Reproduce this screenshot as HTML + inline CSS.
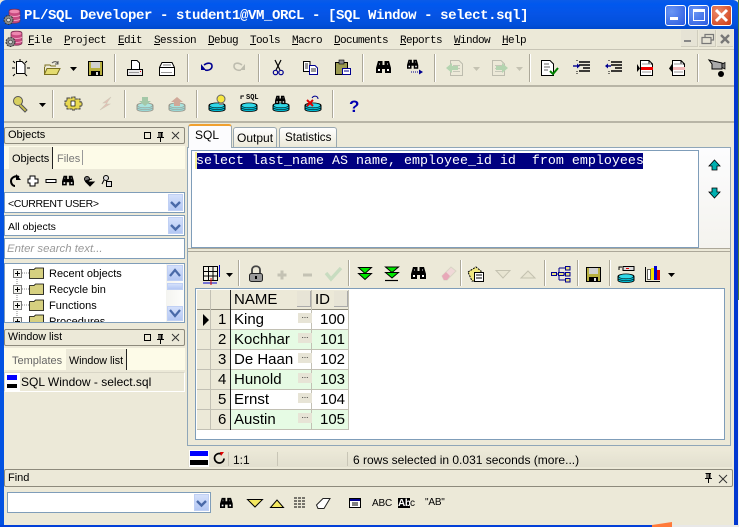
<!DOCTYPE html>
<html><head><meta charset="utf-8"><title>PL/SQL Developer</title>
<style>
html,body{margin:0;padding:0;background:#4d7a3a;}
#w{position:relative;width:739px;height:527px;overflow:hidden;background:#ece9d8;font-family:"Liberation Sans",sans-serif;font-size:11px;color:#000;}
#w div{position:absolute;box-sizing:border-box;}
.t{white-space:nowrap;line-height:16px;}
.m{font-family:"Liberation Mono",monospace;font-size:11px;letter-spacing:-.6px;top:33px;color:#000;white-space:nowrap;line-height:16px;}
.m u{text-decoration:underline;}
.hl{background:#b8b5a6;height:1px;}
.ph{border:1px solid #8d8a7c;border-radius:2px;background:#ece9d8;}
.inp{background:#fff;border:1px solid #7f9db9;}
.cb{background:linear-gradient(#d4e0fb,#b4c8f4);border:1px solid #c0d0f4;}
.c{font-size:15px;line-height:22px;white-space:nowrap;}
.gr{background:#e6fbe4;}
.dots{background:#e7e4d6;width:14px;height:10px;font-size:8px;line-height:5px;text-align:center;letter-spacing:0;}
svg{position:absolute;left:0;top:0;}
</style></head><body><div id="w">

<!-- window frame -->
<div style="left:0;top:0;width:739px;height:29px;background:linear-gradient(#0a5be8 0,#0058ee 4px,#0654e6 14px,#0250dc 24px,#0048cc 29px);border-radius:6px 6px 0 0;"></div>
<div style="left:0;top:29px;width:4px;height:498px;background:#0252e2;"></div>
<div style="left:734px;top:29px;width:4px;height:496px;background:#0238d0;"></div>
<div style="left:738px;top:0;width:1px;height:300px;background:#4d7a3a;"></div>
<div style="left:738px;top:300px;width:1px;height:227px;background:#f4f4f4;"></div>
<div style="left:0;top:525px;width:652px;height:2px;background:#0240d8;"></div>
<div style="left:672px;top:525px;width:67px;height:2px;background:#e8e8e8;"></div>
<div class="t" style="left:24px;top:8px;font:bold 14px/16px 'Liberation Mono',monospace;letter-spacing:-.4px;color:#fff;">PL/SQL Developer - student1@VM_ORCL - [SQL Window - select.sql]</div>

<!-- window buttons -->
<div style="left:665px;top:5px;width:21px;height:21px;border:1px solid #fff;border-radius:3px;background:radial-gradient(circle at 30% 30%,#6a96f4,#2a5ae0);"></div>
<div style="left:688px;top:5px;width:21px;height:21px;border:1px solid #fff;border-radius:3px;background:radial-gradient(circle at 30% 30%,#6a96f4,#2a5ae0);"></div>
<div style="left:711px;top:5px;width:21px;height:21px;border:1px solid #fff;border-radius:3px;background:radial-gradient(circle at 30% 30%,#ec8a6a,#cf3a12);"></div>
<div style="left:670px;top:17px;width:8px;height:3px;background:#fff;"></div>
<div style="left:693px;top:9px;width:12px;height:12px;border:1px solid #fff;border-top:3px solid #fff;"></div>

<!-- menu -->
<div class="hl" style="left:4px;top:49px;width:730px;background:#c8c5b6;"></div>
<div class="m" style="left:28px;"><u>F</u>ile</div>
<div class="m" style="left:64px;"><u>P</u>roject</div>
<div class="m" style="left:118px;"><u>E</u>dit</div>
<div class="m" style="left:154px;"><u>S</u>ession</div>
<div class="m" style="left:208px;"><u>D</u>ebug</div>
<div class="m" style="left:250px;"><u>T</u>ools</div>
<div class="m" style="left:292px;"><u>M</u>acro</div>
<div class="m" style="left:334px;"><u>D</u>ocuments</div>
<div class="m" style="left:400px;"><u>R</u>eports</div>
<div class="m" style="left:454px;"><u>W</u>indow</div>
<div class="m" style="left:502px;"><u>H</u>elp</div>
<div style="left:681px;top:30px;width:17px;height:17px;background:#e6e3d5;border-right:1px solid #d0cdbe;border-bottom:1px solid #d0cdbe;"></div>
<div style="left:699px;top:30px;width:17px;height:17px;background:#e6e3d5;border-right:1px solid #d0cdbe;border-bottom:1px solid #d0cdbe;"></div>
<div style="left:717px;top:30px;width:16px;height:17px;background:#e6e3d5;border-bottom:1px solid #d0cdbe;"></div>

<div class="hl" style="left:4px;top:85px;width:730px;height:2px;"></div>
<div class="hl" style="left:4px;top:121px;width:730px;height:2px;"></div>

<!-- Objects panel -->
<div class="ph" style="left:4px;top:127px;width:181px;height:17px;"></div>
<div class="t" style="left:8px;top:127px;">Objects</div>
<div style="left:4px;top:146px;width:181px;height:23px;background:#fdfbe8;"></div>
<div style="left:9px;top:147px;width:44px;height:22px;background:#ece9d8;border-right:1px solid #222;"></div>
<div class="t" style="left:12px;top:151px;">Objects</div>
<div class="t" style="left:57px;top:151px;color:#777;">Files</div>
<div style="left:82px;top:150px;width:1px;height:15px;background:#999;"></div>

<div class="inp" style="left:4px;top:192px;width:181px;height:21px;"></div>
<div class="t" style="left:8px;top:196px;font-size:10.5px;letter-spacing:-.35px;">&lt;CURRENT USER&gt;</div>
<div class="cb" style="left:168px;top:194px;width:15px;height:17px;"></div>
<div class="inp" style="left:4px;top:215px;width:181px;height:21px;"></div>
<div class="t" style="left:8px;top:219px;font-size:10.5px;">All objects</div>
<div class="cb" style="left:168px;top:217px;width:15px;height:17px;"></div>
<div class="inp" style="left:4px;top:238px;width:181px;height:21px;border-color:#7f9db9;"></div>
<div class="t" style="left:7px;top:241px;color:#999;font-style:italic;font-size:11.4px;">Enter search text...</div>

<!-- tree -->
<div class="inp" style="left:4px;top:263px;width:181px;height:60px;overflow:hidden;">
 <div class="t" style="left:44px;top:2px;font-size:11px;">Recent objects</div>
 <div class="t" style="left:44px;top:18px;font-size:11px;">Recycle bin</div>
 <div class="t" style="left:44px;top:34px;font-size:11px;">Functions</div>
 <div class="t" style="left:44px;top:50px;font-size:11px;">Procedures</div>
</div>
<div style="left:166px;top:264px;width:18px;height:58px;background:linear-gradient(90deg,#f4f4f0,#fdfdfb);"></div>
<div class="cb" style="left:167px;top:265px;width:16px;height:16px;"></div>
<div class="cb" style="left:167px;top:283px;width:16px;height:7px;"></div>
<div class="cb" style="left:167px;top:306px;width:16px;height:15px;"></div>

<!-- Window list panel -->
<div class="ph" style="left:4px;top:329px;width:181px;height:17px;"></div>
<div class="t" style="left:8px;top:329px;font-size:10.7px;">Window list</div>
<div style="left:4px;top:348px;width:181px;height:22px;background:#fdfbe8;"></div>
<div style="left:66px;top:349px;width:61px;height:21px;background:#ece9d8;border-right:1px solid #222;"></div>
<div class="t" style="left:12px;top:353px;color:#666;">Templates</div>
<div class="t" style="left:69px;top:353px;font-size:10.7px;">Window list</div>
<div style="left:4px;top:372px;width:181px;height:20px;background:#ece9d8;border:1px solid #d8d5c6;border-right:1px solid #fff;border-bottom:1px solid #fff;"></div>
<div style="left:5px;top:373px;width:15px;height:18px;background:#fff;"></div>
<div style="left:7px;top:375px;width:10px;height:5px;background:#0000ff;"></div>
<div style="left:7px;top:384px;width:10px;height:4px;background:#000;"></div>
<div class="t" style="left:21px;top:374px;font-size:12px;">SQL Window - select.sql</div>

<!-- tabs -->
<div style="left:187px;top:147px;width:544px;height:299px;border:1px solid #8fa6b8;background:#ece9d8;"></div>
<div style="left:233px;top:127px;width:44px;height:20px;border:1px solid #9aa8b0;border-bottom:0;border-radius:3px 3px 0 0;background:linear-gradient(#fff,#ece9d8);"></div>
<div style="left:279px;top:127px;width:58px;height:20px;border:1px solid #9aa8b0;border-bottom:0;border-radius:3px 3px 0 0;background:linear-gradient(#fff,#ece9d8);"></div>
<div style="left:188px;top:124px;width:44px;height:25px;border:1px solid #9aa8b0;border-top:2px solid #f0a030;border-bottom:0;border-radius:3px 3px 0 0;background:#fcfcfe;"></div>
<div class="t" style="left:195px;top:127px;font-size:12px;">SQL</div>
<div class="t" style="left:237px;top:130px;font-size:12px;">Output</div>
<div class="t" style="left:285px;top:130px;font-size:11.6px;">Statistics</div>

<!-- editor -->
<div style="left:188px;top:148px;width:542px;height:100px;background:linear-gradient(#fcfcfe,#f4f3ee);"></div>
<div class="inp" style="left:191px;top:150px;width:508px;height:98px;"></div>
<div style="left:197px;top:153px;width:446px;height:16px;background:#000080;"></div>
<div style="left:195px;top:152px;width:2px;height:17px;background:#f4f09a;"></div>
<div class="t" style="left:196px;top:154px;font:13.33px/15px 'Liberation Mono',monospace;color:#fff;white-space:pre;">select last_name AS name, employee_id id  from employees</div>
<div style="left:188px;top:248px;width:542px;height:1px;background:#aca899;"></div>
<div style="left:188px;top:251px;width:542px;height:1px;background:#aca899;"></div>

<!-- grid -->
<div class="inp" style="left:195px;top:288px;width:530px;height:152px;"></div>
<div style="left:197px;top:290px;width:152px;height:20px;background:#ece9d8;border-bottom:1px solid #8d8a7c;"></div>
<div style="left:197px;top:310px;width:34px;height:120px;background:#ece9d8;"></div>
<div style="left:231px;top:310px;width:118px;height:20px;background:#fff;"></div>
<div class="gr" style="left:231px;top:330px;width:118px;height:20px;"></div>
<div style="left:231px;top:350px;width:118px;height:20px;background:#fff;"></div>
<div class="gr" style="left:231px;top:370px;width:118px;height:20px;"></div>
<div style="left:231px;top:390px;width:118px;height:20px;background:#fff;"></div>
<div class="gr" style="left:231px;top:410px;width:118px;height:20px;"></div>
<div style="left:197px;top:329px;width:152px;height:1px;background:#c2c0b4;"></div>
<div style="left:197px;top:349px;width:152px;height:1px;background:#c2c0b4;"></div>
<div style="left:197px;top:369px;width:152px;height:1px;background:#c2c0b4;"></div>
<div style="left:197px;top:389px;width:152px;height:1px;background:#c2c0b4;"></div>
<div style="left:197px;top:409px;width:152px;height:1px;background:#c2c0b4;"></div>
<div style="left:197px;top:429px;width:152px;height:1px;background:#c2c0b4;"></div>
<div style="left:210px;top:290px;width:1px;height:140px;background:#c2c0b4;"></div>
<div style="left:230px;top:290px;width:1px;height:140px;background:#222;"></div>
<div style="left:311px;top:290px;width:1px;height:140px;background:#c2c0b4;"></div>
<div style="left:348px;top:290px;width:1px;height:140px;background:#c2c0b4;"></div>
<div style="left:297px;top:291px;width:14px;height:16px;background:#e7e4d6;border-right:1px solid #aaa;border-bottom:1px solid #aaa;"></div>
<div style="left:334px;top:291px;width:14px;height:16px;background:#e7e4d6;border-right:1px solid #aaa;border-bottom:1px solid #aaa;"></div>
<div class="c" style="left:234px;top:289px;">NAME</div>
<div class="c" style="left:315px;top:289px;">ID</div>
<div class="c" style="left:218px;top:309px;">1</div><div class="c" style="left:234px;top:309px;">King</div><div class="c" style="left:320px;top:309px;">100</div>
<div class="c" style="left:218px;top:329px;">2</div><div class="c" style="left:234px;top:329px;">Kochhar</div><div class="c" style="left:320px;top:329px;">101</div>
<div class="c" style="left:218px;top:349px;">3</div><div class="c" style="left:234px;top:349px;">De Haan</div><div class="c" style="left:320px;top:349px;">102</div>
<div class="c" style="left:218px;top:369px;">4</div><div class="c" style="left:234px;top:369px;">Hunold</div><div class="c" style="left:320px;top:369px;">103</div>
<div class="c" style="left:218px;top:389px;">5</div><div class="c" style="left:234px;top:389px;">Ernst</div><div class="c" style="left:320px;top:389px;">104</div>
<div class="c" style="left:218px;top:409px;">6</div><div class="c" style="left:234px;top:409px;">Austin</div><div class="c" style="left:320px;top:409px;">105</div>
<div class="dots" style="left:298px;top:313px;">...</div>
<div class="dots" style="left:298px;top:333px;">...</div>
<div class="dots" style="left:298px;top:353px;">...</div>
<div class="dots" style="left:298px;top:373px;">...</div>
<div class="dots" style="left:298px;top:393px;">...</div>
<div class="dots" style="left:298px;top:413px;">...</div>

<!-- status -->
<div style="left:188px;top:450px;width:544px;height:17px;background:linear-gradient(#ece9d8,#e2dfcf);"></div>
<div style="left:189px;top:450px;width:20px;height:17px;background:#fff;"></div>
<div style="left:190px;top:451px;width:18px;height:5px;background:#0000ff;"></div>
<div style="left:190px;top:460px;width:18px;height:5px;background:#000;"></div>
<div style="left:228px;top:452px;width:1px;height:14px;background:#c8c5b6;"></div>
<div style="left:277px;top:452px;width:1px;height:14px;background:#c8c5b6;"></div>
<div style="left:347px;top:452px;width:1px;height:14px;background:#c8c5b6;"></div>
<div class="t" style="left:233px;top:452px;font-size:12px;">1:1</div>
<div class="t" style="left:353px;top:452px;font-size:12px;">6 rows selected in 0.031 seconds (more...)</div>

<!-- find -->
<div class="ph" style="left:4px;top:469px;width:729px;height:18px;"></div>
<div class="t" style="left:8px;top:470px;">Find</div>
<div class="inp" style="left:7px;top:492px;width:204px;height:21px;"></div>
<div class="cb" style="left:194px;top:494px;width:15px;height:17px;"></div>
<div class="t" style="left:372px;top:496px;font-size:10px;letter-spacing:-.2px;">ABC</div>
<div style="left:398px;top:498px;width:12px;height:10px;background:#000;"></div>
<div class="t" style="left:398px;top:496px;font-size:10px;font-weight:bold;color:#fff;letter-spacing:-.3px;">Ab</div>
<div class="t" style="left:410px;top:496px;font-size:10px;">c</div>
<div class="t" style="left:425px;top:495px;font-size:10px;letter-spacing:-.2px;">"AB"</div>

<svg width="739" height="527" viewBox="0 0 739 527" xmlns="http://www.w3.org/2000/svg">
<defs>
 <g id="bin"><path d="M0 8L2 1H6.500V5H8.500V1H13L15 8V13H9V9H6V13H0Z" fill="#000"/><rect x="2" y="9" width="2" height="2" fill="#fff"/><rect x="11" y="9" width="2" height="2" fill="#fff"/><rect x="3" y="3" width="1" height="2" fill="#777"/><rect x="11" y="3" width="1" height="2" fill="#777"/></g>
 <g id="db"><path d="M0 8C0 4 16 4 16 8V13C16 16.500 0 16.500 0 13Z" fill="#00b8d0" stroke="#000"/><ellipse cx="8" cy="8" rx="7.500" ry="3" fill="#30d8e8" stroke="#000" stroke-width=".7"/><path d="M0 11C3 14 13 14 16 11" fill="none" stroke="#000" stroke-width=".7"/></g>
 <g id="save"><rect x=".5" y=".5" width="14" height="14" fill="#b8b040" stroke="#000"/><rect x="3" y="1" width="9" height="6" fill="#d0d0d0"/><rect x="3" y="10" width="9" height="5" fill="#000"/><rect x="8" y="11" width="2" height="3" fill="#ddd"/></g>
 <g id="doc2"><path d="M3.500 .5H12L15.500 4V15.500H3.500Z" fill="#fff" stroke="#000"/><path d="M12 .5V4H15.500" fill="none" stroke="#000"/></g>
 <path id="drop" d="M0 0H7L3.500 4Z" fill="#000"/>
 <path id="gdrop" d="M0 0H7L3.500 4Z" fill="#c4c2b2"/>
 <g id="gdoc"><path d="M3.500 .5H12L15.500 4V15.500H3.500Z" fill="#ece9d8" stroke="#bdbcae"/><rect x="6" y="5" width="7" height="1" fill="#c6c6b8"/><rect x="6" y="8" width="7" height="1" fill="#c6c6b8"/><rect x="6" y="11" width="7" height="1" fill="#c6c6b8"/></g>
 <g id="logo"><path d="M6 2C6 -.5 17 -.5 17 2V12C17 15 6 15 6 12Z" fill="#c84a80" stroke="#703050" stroke-width=".7"/><ellipse cx="11.500" cy="2.500" rx="5" ry="1.800" fill="#ee88b0"/><path d="M6 6C8 8 15 8 17 6M6 10C8 12 15 12 17 10" fill="none" stroke="#f0a0c0"/><circle cx="5.500" cy="11" r="4.500" fill="#8a8a88" stroke="#333" stroke-dasharray="2 1"/><circle cx="5.500" cy="11" r="1.800" fill="#ddd" stroke="#333" stroke-width=".6"/></g>
 <g id="chev"><path d="M3 6L7.500 10.500L12 6" fill="none" stroke="#4a6aa8" stroke-width="2.400"/></g>
 <g id="folder"><path d="M.5 2.500H5L6.500 1H14.500V11.500H.5Z" fill="#d6d080" stroke="#000" stroke-width=".8"/></g>
 <g id="plus"><rect x=".5" y=".5" width="8" height="8" fill="#f4f4f0" stroke="#777"/><path d="M2 4.500H7M4.500 2V7" stroke="#000"/></g>
 <g id="panelbtns"><rect x=".5" y=".5" width="6" height="6" fill="none" stroke="#000"/><path d="M14 0H19V1H18.500V5H20V6H17V10H16V6H13V5H14.500V1H14ZM15.500 1V5H16.500V1Z" fill="#000"/><path d="M28 0L35 7M35 0L28 7" stroke="#333" fill="none"/></g>
 <g id="gup"><path d="M0 8L7 1L14 8Z" fill="#e8e5d2" stroke="#c4c2b0"/></g>
</defs>

<!-- app logos -->
<use href="#logo" x="3" y="9"/>
<use href="#logo" x="5" y="31"/>

<!-- close X, MDI glyphs -->
<path d="M716 10L727 21M727 10L716 21" stroke="#fff" stroke-width="3" fill="none"/>
<rect x="684" y="40" width="7" height="2" fill="#888"/>
<path d="M702 37.500H711V43.500H702ZM705 37V34.500H713.500V40H711" fill="none" stroke="#777" stroke-width="1.200"/>
<path d="M721 35L729 43M729 35L721 43" stroke="#777" stroke-width="2.400" fill="none"/>

<!-- toolbar 1 -->
<path d="M16.500 61.500H22L25 64.500V73.500H16.500Z" fill="#fff" stroke="#000"/>
<path d="M20 59V61M12 68H15M27 68H30M13 61L15 63M27 61L25 63M13 76L15 74M27 76L25 74" stroke="#000" fill="none"/>
<path d="M44.500 67V74.500H57L60 68.500H47L44.500 74" fill="#e4dc70" stroke="#7a7020"/>
<path d="M45 67V65H50L51 66H56" fill="none" stroke="#7a7020"/>
<path d="M52 63C54 61 57 61 58 64M58 61V64H55" fill="none" stroke="#555"/>
<use href="#drop" x="70" y="67"/>
<use href="#save" x="88" y="61"/>
<rect x="114" y="54" width="1" height="28" fill="#aca899"/>
<rect x="115" y="54" width="1" height="28" fill="#fff"/>
<path d="M127.500 69.500H142.500V75.500H127.500Z" fill="#e8e8e8" stroke="#000"/><path d="M131.500 60.500H137L139.500 63V69.500H131.500Z" fill="#fff" stroke="#000"/><rect x="129" y="72" width="10" height="1" fill="#999"/><rect x="140" y="71" width="1" height="1" fill="#e00"/>
<path d="M159.500 67.500L162 62.500H172L174.500 67.500V75.500H159.500Z" fill="#fff" stroke="#000"/><path d="M160 67.500H174" stroke="#000"/><rect x="161" y="72" width="11" height="1" fill="#999"/><rect x="163" y="64" width="8" height="2" fill="#bbb"/>
<rect x="187" y="54" width="1" height="28" fill="#aca899"/><rect x="188" y="54" width="1" height="28" fill="#fff"/>
<path d="M205 70C209 71 212 69 212 66C212 63 208 62 204 65" fill="none" stroke="#000090" stroke-width="1.600"/><path d="M201 64V70H206" fill="#000090"/>
<path d="M241 70C237 71 234 69 234 66C234 63 238 62 242 65" fill="none" stroke="#bdbcae" stroke-width="1.600"/><path d="M245 64V70H240" fill="#bdbcae"/>
<rect x="258" y="54" width="1" height="28" fill="#aca899"/><rect x="259" y="54" width="1" height="28" fill="#fff"/>
<path d="M275 60L280 70M281 60L276 70" stroke="#000" stroke-width="1.200" fill="none"/><circle cx="275.500" cy="72.500" r="2.200" fill="none" stroke="#000090" stroke-width="1.200"/><circle cx="281" cy="72.500" r="2.200" fill="none" stroke="#000090" stroke-width="1.200"/>
<path d="M303.500 61.500H310V71.500H303.500Z" fill="#fff" stroke="#000"/><path d="M309.500 65.500H315L317.500 68V74.500H309.500Z" fill="#fff" stroke="#000090"/><path d="M305 64H308M305 66H308M305 68H308M311 69H316M311 71H316" stroke="#333"/>
<rect x="335.500" y="62.500" width="12" height="12" fill="#9a9a50" stroke="#000"/><rect x="339" y="60" width="5" height="4" fill="#888" stroke="#000" stroke-width=".6"/><path d="M342.500 68.500H350.500V74.500H342.500Z" fill="#fff" stroke="#000090"/><path d="M344 71H349" stroke="#000090"/>
<rect x="362" y="54" width="1" height="28" fill="#aca899"/><rect x="363" y="54" width="1" height="28" fill="#fff"/>
<use href="#bin" x="376" y="60"/>
<use href="#bin" transform="translate(407,59) scale(.75)"/>
<path d="M411 72H420" stroke="#000090" stroke-dasharray="1 1"/><path d="M419 69.500L423 72L419 74.500Z" fill="#000090"/>
<rect x="434" y="54" width="1" height="28" fill="#aca899"/><rect x="435" y="54" width="1" height="28" fill="#fff"/>
<use href="#gdoc" x="447" y="60"/><path d="M446 68L452 63V66H458V70H452V73Z" fill="#b4d4b0"/>
<use href="#gdrop" x="473" y="67"/>
<use href="#gdoc" x="489" y="60"/><path d="M508 68L502 63V66H496V70H502V73Z" fill="#b4d4b0"/>
<use href="#gdrop" x="516" y="67"/>
<rect x="529" y="54" width="1" height="28" fill="#aca899"/><rect x="530" y="54" width="1" height="28" fill="#fff"/>
<path d="M541.500 60.500H550L553.500 64V75.500H541.500Z" fill="#fff" stroke="#000"/><path d="M544 64H549M544 67H550M544 70H548" stroke="#666"/><path d="M550 71L553 74L558 68" fill="none" stroke="#008000" stroke-width="2"/>
<path d="M579 62H590M579 65H590M583 68H590M579 71H590" stroke="#000" stroke-width="1.400"/><path d="M573 66H578" stroke="#000090" stroke-width="1.400"/><path d="M577 63.500L580 66L577 68.500Z" fill="#000090"/><path d="M577 60V62M577 71V75" stroke="#000" stroke-dasharray="1 1"/>
<path d="M611 62H622M611 65H622M615 68H622M611 71H622" stroke="#000" stroke-width="1.400"/><path d="M606 66H611" stroke="#000090" stroke-width="1.400"/><path d="M608 63.500L605 66L608 68.500Z" fill="#000090"/><path d="M609 60V62M609 71V75" stroke="#000" stroke-dasharray="1 1"/>
<use href="#doc2" x="637" y="60"/><rect x="641" y="67" width="12" height="3" fill="#e00"/><path d="M637 64L640 68.500L637 72Z" fill="#000"/><path d="M642 64H651M642 72H651" stroke="#999"/>
<use href="#doc2" x="669" y="60"/><rect x="673" y="67" width="12" height="3" fill="#f4b8b8"/><path d="M672 64L669 68.500L672 72Z" fill="#000"/><path d="M674 64H683M674 72H683" stroke="#999"/>
<rect x="697" y="54" width="1" height="28" fill="#aca899"/><rect x="698" y="54" width="1" height="28" fill="#fff"/>
<path d="M709 60L722 63V69H712V64Z" fill="#aaa" stroke="#000"/><path d="M722 64L725 62.500V69L722 67.500Z" fill="#777" stroke="#000" stroke-width=".7"/><circle cx="721" cy="74" r="3" fill="#000"/>

<!-- toolbar 2 -->
<circle cx="18" cy="101" r="4.500" fill="#d8d060" stroke="#555"/><path d="M21 104L27 110L25 112L19 106" fill="#c8c050" stroke="#555"/>
<use href="#drop" x="39" y="103"/>
<rect x="52" y="90" width="1" height="28" fill="#aca899"/><rect x="53" y="90" width="1" height="28" fill="#fff"/>
<path d="M67 98H72V97H75V99H80V102H82V106H80V109H75V110H72V109H67V106H65V101H67Z" fill="#e8d850" stroke="#444" stroke-dasharray="3 .6"/><rect x="71" y="101" width="4" height="5" fill="#fff" stroke="#000" stroke-width=".7"/>
<path d="M111 97L103 103H107L100 110L110 104H106Z" fill="#e4c0b4" stroke="#d0c8b8" stroke-width=".6"/>
<rect x="124" y="90" width="1" height="28" fill="#aca899"/><rect x="125" y="90" width="1" height="28" fill="#fff"/>
<g opacity=".35"><use href="#db" transform="translate(137,99) scale(1,.8)"/></g><path d="M142 97H148V101H151L145 106L139 101H142Z" fill="#a4c8a8"/>
<g opacity=".35"><use href="#db" transform="translate(169,99) scale(1,.8)"/></g><path d="M174 106H180V102H183L177 97L171 102H174Z" fill="#d0a898"/>
<rect x="196" y="90" width="1" height="28" fill="#aca899"/><rect x="197" y="90" width="1" height="28" fill="#fff"/>
<use href="#db" transform="translate(209,99) scale(1,.8)"/><circle cx="221" cy="99" r="4" fill="#f8e840" stroke="#666"/><path d="M219 103H223V105H219Z" fill="#888"/>
<use href="#db" transform="translate(241,99) scale(1,.8)"/>
<use href="#db" transform="translate(273,99) scale(1,.8)"/><use href="#bin" transform="translate(275,95) scale(.7)"/>
<use href="#db" transform="translate(305,99) scale(1,.8)"/><path d="M307 100L313 106M313 100L307 106" stroke="#e00000" stroke-width="2"/><path d="M312 98C314 95 318 96 318 99" fill="none" stroke="#000090"/>
<rect x="332" y="90" width="1" height="28" fill="#aca899"/><rect x="333" y="90" width="1" height="28" fill="#fff"/>
<text x="349" y="112" font-family="Liberation Sans" font-weight="bold" font-size="17" fill="#0000b0">?</text>
<text x="246" y="99" font-family="Liberation Mono" font-weight="bold" font-size="7" fill="#000">SQL</text>
<path d="M241 99V96H244" fill="none" stroke="#000"/>

<!-- panel buttons -->
<use href="#panelbtns" x="144" y="132"/>
<use href="#panelbtns" x="144" y="334"/>
<path d="M705 473H711V474H710.500V478H712V479H709V483H708V479H705V478H706.500V474H706ZM707.500 474V478H708.500V474Z" fill="#000"/>
<path d="M719 475L727 483M727 475L719 483" stroke="#333" fill="none"/>

<!-- object toolbar -->
<path d="M19 177C15 175 11 178 11 181C11 184 13 186 15 186" fill="none" stroke="#000" stroke-width="2"/><path d="M16 174V180H21Z" fill="#000"/>
<path d="M30 176H35V179H38V183H35V186H30V183H28V179H30Z" fill="#fff" stroke="#000"/>
<rect x="46" y="179.500" width="10" height="3" fill="#fff" stroke="#000"/>
<use href="#bin" transform="translate(62,175) scale(.8)"/>
<circle cx="87" cy="179" r="2.500" fill="#777" stroke="#000"/><path d="M85 181L92 179M86 182H94L90 186Z" fill="#000" stroke="#000"/>
<circle cx="106" cy="178" r="2.500" fill="#ddd" stroke="#000"/><path d="M104 180L102 184" stroke="#000"/><rect x="106.500" y="181.500" width="5" height="5" fill="#ddd" stroke="#000"/>

<!-- combobox chevrons -->
<use href="#chev" x="168" y="196"/><use href="#chev" x="168" y="219"/><use href="#chev" x="194" y="495"/>

<!-- tree -->
<path d="M17 271V322M22 273H29M22 289H29M22 305H29" stroke="#888" stroke-dasharray="1 1" fill="none"/>
<use href="#plus" x="13" y="269"/><use href="#plus" x="13" y="285"/><use href="#plus" x="13" y="301"/>
<svg x="0" y="0" width="739" height="322" viewBox="0 0 739 322" overflow="hidden"><use href="#plus" x="13" y="317"/><use href="#folder" x="29" y="314"/></svg>
<use href="#folder" x="29" y="267"/><use href="#folder" x="29" y="283"/><use href="#folder" x="29" y="299"/>
<path d="M170 276L175 270L180 276" fill="none" stroke="#4a6aa8" stroke-width="2.200"/>
<path d="M170 310L175 316L180 310" fill="none" stroke="#4a6aa8" stroke-width="2.200"/>

<!-- side arrows -->
<path d="M714.500 160L720 166H717V170H712V166H709Z" fill="#00b0b0" stroke="#000" stroke-width=".8"/>
<path d="M714.500 198L720 192H717V188H712V192H709Z" fill="#00b0b0" stroke="#000" stroke-width=".8"/>

<!-- grid toolbar -->
<path d="M203.500 266.500H217.500V280.500H203.500ZM203.500 271.500H217.500M203.500 276H217.500M208.500 266.500V280.500M213 266.500V280.500" fill="#f4f2e6" stroke="#000"/>
<path d="M219.500 265V277M203 283H217" stroke="#0000d0"/><path d="M211 278V285" stroke="#d00000"/>
<use href="#drop" x="226" y="273"/>
<rect x="238" y="260" width="1" height="26" fill="#aca899"/><rect x="239" y="260" width="1" height="26" fill="#fff"/>
<path d="M252 274V270C252 265 260 265 260 270V274" fill="none" stroke="#444" stroke-width="1.800"/><rect x="249.500" y="273.500" width="13" height="8" rx="2" fill="#999" stroke="#222"/><rect x="255" y="276" width="2" height="3" fill="#000"/>
<path d="M282 270.500V279.500M277.500 275H286.500" stroke="#c4c2b4" stroke-width="3"/>
<path d="M303 275H312" stroke="#c4c2b4" stroke-width="3"/>
<path d="M326 273L331 279L341 268" fill="none" stroke="#c8dcc0" stroke-width="3.400"/>
<rect x="348" y="260" width="1" height="26" fill="#aca899"/><rect x="349" y="260" width="1" height="26" fill="#fff"/>
<path d="M358.500 267.500H371.500L365 273.500ZM358.500 273.500H371.500L365 279.500Z" fill="#00e800" stroke="#000"/>
<path d="M385.500 267H398.500L392 272.500ZM385.500 272.500H398.500L392 278Z" fill="#00e800" stroke="#000"/><path d="M385 280.500H398" stroke="#000" stroke-width="1.200"/>
<use href="#bin" x="411" y="266"/>
<path d="M442 276L451 267L456 271L447 280H444Z" fill="#f0d8d8" stroke="#d8d4c4"/><path d="M442 276L446 272L450 276L447 280H444Z" fill="#e8a8b8"/>
<rect x="460" y="260" width="1" height="26" fill="#aca899"/><rect x="461" y="260" width="1" height="26" fill="#fff"/>
<path d="M468 272L476 267L481 271V281H472Z" fill="#f0e880" stroke="#000" stroke-dasharray="2 1"/><path d="M474.500 272.500H483.500V281.500H474.500Z" fill="#fff" stroke="#000"/><path d="M476 275H482M476 278H482" stroke="#000"/>
<path d="M496 270.500H510L503 278Z" fill="#e8e5d2" stroke="#c4c2b0"/>
<use href="#gup" x="521" y="270"/>
<rect x="544" y="260" width="1" height="26" fill="#aca899"/><rect x="545" y="260" width="1" height="26" fill="#fff"/>
<path d="M556 274H559M559 268V280M559 268H565M559 274H565M559 280H565" stroke="#000090" fill="none"/>
<path d="M551.500 272.500H556.500V275.500H551.500ZM565.500 266.500H570V270H565.500ZM565.500 272.500H570V276H565.500ZM565.500 278.500H570V282H565.500ZM558.500 272.500H564V275.500H558.500Z" fill="#e8e080" stroke="#000090"/>
<rect x="577" y="260" width="1" height="26" fill="#aca899"/><rect x="578" y="260" width="1" height="26" fill="#fff"/>
<use href="#save" x="586" y="267"/>
<rect x="609" y="260" width="1" height="26" fill="#aca899"/><rect x="610" y="260" width="1" height="26" fill="#fff"/>
<use href="#db" transform="translate(618,270) scale(1,.8)"/><rect x="623" y="266.500" width="11" height="4" fill="#ddd" stroke="#000"/><rect x="626" y="268" width="3" height="1" fill="#d00"/><path d="M619 270V267H622" fill="none" stroke="#000"/>
<path d="M645.500 267V281.500H660" fill="none" stroke="#000"/><rect x="647.500" y="269.500" width="3" height="10" fill="#fff" stroke="#000" stroke-width=".6"/><rect x="651" y="268" width="3" height="12" fill="#f0e000"/><rect x="654" y="266" width="3" height="14" fill="#0000d0"/><rect x="657" y="270" width="3" height="10" fill="#e00000"/>
<use href="#drop" x="668" y="273"/>

<!-- grid indicator -->
<path d="M203 314L209 320L203 326Z" fill="#000"/>
<!-- status refresh -->
<path d="M221 454C218 452.500 214.500 455 214.500 458C214.500 461 217 463 219.500 463C222 463 224 461 224 458.500" fill="none" stroke="#000" stroke-width="1.700"/><path d="M220 452H224L221 456Z" fill="#e00000"/>

<!-- bottom-right orange -->
<path d="M652 527V525L672 522V527Z" fill="#ff7a3a"/>

<!-- find toolbar -->
<use href="#bin" transform="translate(220,497) scale(.85)"/>
<path d="M247.500 499.500H262.500L255 507Z" fill="#f4e860" stroke="#000"/>
<path d="M270.500 507.500H283.500L277 500Z" fill="#f4e860" stroke="#000"/>
<path d="M294 498H306M294 501H306M294 504H306M294 507H306" stroke="#000" stroke-dasharray="3 1" fill="none"/>
<path d="M316.500 505L323 498.500H330L324 508.500H318Z" fill="#fff" stroke="#222"/>
<rect x="349.500" y="498.500" width="11" height="9" fill="#fff" stroke="#000"/><rect x="350" y="499" width="10" height="2" fill="#000090"/><path d="M352 503H358M352 505H358" stroke="#000"/>
</svg>

</div></body></html>
